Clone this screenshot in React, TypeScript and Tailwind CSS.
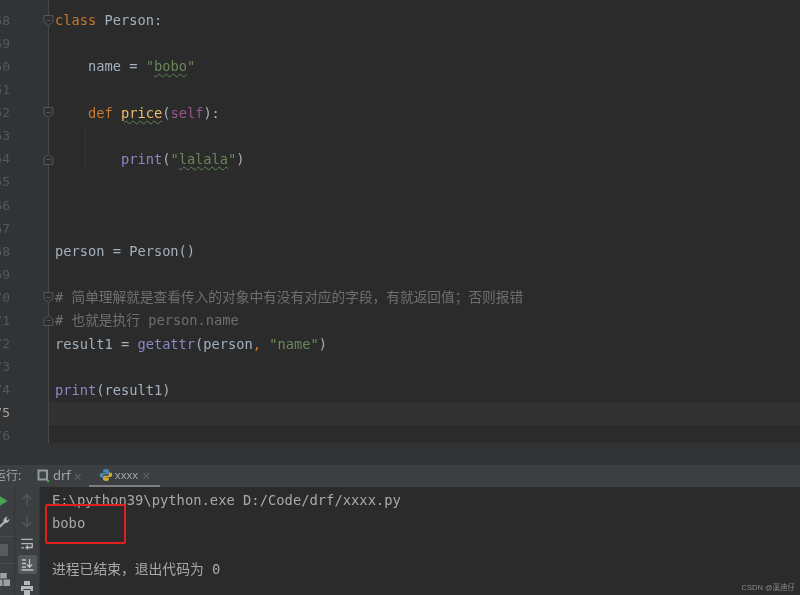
const mono = "font-['DejaVu_Sans_Mono','Noto_Sans_CJK_SC',monospace]";

function Fold({ kind }: { kind: "open" | "close" }) {
  return (
    <svg width="11" height="13" viewBox="0 0 11 13" className="absolute -right-[6px] top-[5px] z-10">
      {kind === "open" ? (
        <path d="M1 1.5H10V8L5.5 11.5L1 8Z" fill="#2d2e2f" stroke="#54575a" strokeWidth="1" />
      ) : (
        <path d="M1 11.5H10V5L5.5 1.5L1 5Z" fill="#2d2e2f" stroke="#54575a" strokeWidth="1" />
      )}
      <path d="M3.5 6.5H7.5" stroke="#54575a" strokeWidth="1" />
    </svg>
  );
}

function Row({ n, fold, active, children }: { n: string; fold?: "open" | "close"; active?: boolean; children?: React.ReactNode }) {
  return (
    <div className={`flex h-[23.1px] items-center ${active ? "bg-[#323232]" : ""}`}>
      <div className="relative flex h-full w-[49px] shrink-0 items-center border-r border-[#46484a] bg-[#313335]">
        <span className={`w-[10px] overflow-hidden text-right text-[13px] whitespace-nowrap ${active ? "text-[#a4a3a3]" : "text-[#55585a]"}`} dir="rtl">
          {n}
        </span>
        {fold && <Fold kind={fold} />}
      </div>
      <div className="pl-[6px] text-[13.7px] whitespace-pre text-[#a3b0bd]">{children}</div>
    </div>
  );
}

const Wavy = ({ children, cls }: { children: React.ReactNode; cls: string }) => (
  <span className={`underline decoration-wavy decoration-1 underline-offset-2 decoration-[#62845a] ${cls}`}>{children}</span>
);

function Editor() {
  const str = "text-[#6a8759]";
  const kw = "text-[#c57a35]";
  const fn = "text-[#8888c6]";
  const cm = "text-[#6f6f6f]";
  return (
    <div className="relative h-[443px] shrink-0 overflow-hidden bg-[#2b2b2b]">
      <div className="h-[9px] w-[49px] border-r border-[#46484a] bg-[#313335]" />
      <Row n="68" fold="open"><span className={kw}>class</span> Person:</Row>
      <Row n="69" />
      <Row n="60">    name = <span className={str}>"<Wavy cls={str}>bobo</Wavy>"</span></Row>
      <Row n="61" />
      <Row n="62" fold="open">    <span className={kw}>def</span> <Wavy cls="text-[#e8bf6a]">price</Wavy>(<span className="text-[#94558d]">self</span>):</Row>
      <Row n="63" />
      <Row n="64" fold="close">        <span className={fn}>print</span>(<span className={str}>"<Wavy cls={str}>lalala</Wavy>"</span>)</Row>
      <Row n="65" />
      <Row n="66" />
      <Row n="67" />
      <Row n="68">person = Person()</Row>
      <Row n="69" />
      <Row n="70" fold="open"><span className={cm}># 简单理解就是查看传入的对象中有没有对应的字段，有就返回值；否则报错</span></Row>
      <Row n="71" fold="close"><span className={cm}># 也就是执行 person.name</span></Row>
      <Row n="72">result1 = <span className={fn}>getattr</span>(person<span className={kw}>,</span> <span className={str}>"name"</span>)</Row>
      <Row n="73" />
      <Row n="74"><span className={fn}>print</span>(result1)</Row>
      <Row n="75" active />
      <Row n="76" />
      <div className="absolute left-[85px] top-[124px] h-[44px] w-px bg-[#343434]" />
    </div>
  );
}

function Tabs() {
  return (
    <div className="flex h-[22px] shrink-0 items-center overflow-hidden bg-[#3c3f41] text-[12px] text-[#a2a5a7] font-['Noto_Sans','Noto_Sans_CJK_SC',sans-serif]">
      <span className="-ml-[6px] w-[43px] whitespace-nowrap">运行:</span>
      <svg width="13" height="14" viewBox="0 0 13 14" className="shrink-0">
        <rect x="0.5" y="0.5" width="10.5" height="11" fill="#8f9c98" />
        <rect x="2.5" y="2.5" width="6.5" height="7" fill="#3f4446" />
        <circle cx="11" cy="12" r="1.3" fill="#4aa551" />
      </svg>
      <span className="ml-[3px] text-[13px]">drf</span>
      <span className="ml-[3px] text-[14px] text-[#5f6264]">×</span>
      <div className="ml-[7px] flex h-full w-[71px] items-center border-b-[2px] border-[#7a7e80] pl-[10px]">
        <svg width="14" height="14" viewBox="0 0 14 14" className="shrink-0">
          <path d="M7 1C4.5 1 4 2 4 3V4.5H7.3V5H2.5C1.3 5 .8 6 .8 7.2S1.3 9.5 2.5 9.5H4V8C4 7 5 6.3 6 6.3H8.5C9.4 6.3 10 5.6 10 4.8V3C10 2 9 1 7 1Z" fill="#4d86b3" />
          <path d="M7 13C9.5 13 10 12 10 11V9.5H6.7V9H11.5C12.7 9 13.2 8 13.2 6.8S12.7 4.5 11.5 4.5H10V6C10 7 9 7.7 8 7.7H5.5C4.6 7.7 4 8.4 4 9.2V11C4 12 5 13 7 13Z" fill="#c9a93f" />
        </svg>
        <span className="ml-[2px] text-[11px] text-[#a2a5a7]">xxxx</span>
        <span className="ml-[4px] text-[14px] text-[#5f6264]">×</span>
      </div>
    </div>
  );
}

function Toolbar() {
  return (
    <>
      <div className="flex w-[15px] shrink-0 flex-col items-start overflow-hidden border-r border-[#323436] bg-[#3c3f41] pt-[8px]">
        <svg width="10" height="12" viewBox="0 0 10 12" className="-ml-[2px]"><path d="M1 0.5L9.5 6L1 11.5Z" fill="#4aa551" /></svg>
        <svg width="13" height="13" viewBox="0 0 12 12" className="-ml-[3px] mt-[8px]"><path d="M1 11L6 6.2C5.5 4 7 1.5 10 1.5L8.5 3.5L9.5 5L11.5 3.5C11.5 6 9.5 7.8 7.4 7.3L2.6 12Z" fill="#b4b7b9" /></svg>
        <div className="mt-[8px] h-px w-full bg-[#4a4d4f]" />
        <div className="mt-[7px] h-[12px] w-[8px] bg-[#585b5d]" />
        <div className="mt-[7px] h-px w-full bg-[#4a4d4f]" />
        <svg width="13" height="13" viewBox="0 0 12 12" className="-ml-[3px] mt-[9px]"><path d="M0 6h5v6H0zM6 6h6v6H6zM3 0h6v5H3z" fill="#9da0a2" /></svg>
      </div>
      <div className="flex w-[25px] shrink-0 flex-col items-center border-r border-[#323436] bg-[#3c3f41] pt-[6px]">
        <svg width="14" height="14" viewBox="0 0 14 14"><path d="M7 13V2M2.5 6.5L7 2L11.5 6.5" fill="none" stroke="#55585a" strokeWidth="1.5" /></svg>
        <svg width="14" height="14" viewBox="0 0 14 14" className="mt-[9px]"><path d="M7 1V12M2.5 7.5L7 12L11.5 7.5" fill="none" stroke="#55585a" strokeWidth="1.5" /></svg>
        <svg width="14" height="14" viewBox="0 0 14 14" className="mt-[8px]"><path d="M1 2.5H13M1 7H12.5V11H6M8 9L6 11L8 13M1 11.5H4" fill="none" stroke="#b4b7b9" strokeWidth="1.4" /></svg>
        <div className="mt-[5px] flex h-[19px] w-[19px] shrink-0 items-center justify-center rounded-[2px] bg-[#53575a]">
          <svg width="13" height="13" viewBox="0 0 13 13"><path d="M1 2H5M1 5.5H5M1 9H5M0.5 12H12.5M8.5 1V9M5.8 6.5L8.5 9.3L11.2 6.5" fill="none" stroke="#c0c3c5" strokeWidth="1.3" /></svg>
        </div>
        <svg width="14" height="14" viewBox="0 0 14 14" className="mt-[7px] shrink-0"><path d="M4 0H10V4H4ZM1 5H13V10H10.5V8H3.5V10H1ZM4 9H10V14H4Z" fill="#b4b7b9" /></svg>
      </div>
    </>
  );
}

function Console() {
  return (
    <div className="relative flex min-w-0 flex-1 overflow-hidden bg-[#2b2b2b]">
      <Toolbar />
      <div className={`pl-[12px] pt-[1.5px] text-[13.8px] leading-[23.2px] whitespace-pre text-[#a9a9a9] ${mono}`}>
        <div>E:\python39\python.exe D:/Code/drf/xxxx.py</div>
        <div>bobo</div>
        <div>&nbsp;</div>
        <div>进程已结束，退出代码为 0</div>
      </div>
      <div className="absolute left-[45px] top-[17px] h-[40px] w-[81px] rounded-[2px] border-[2px] border-[#e0211b]" />
      <span className="absolute right-[5px] bottom-[2px] text-[7.5px] text-[#8a8a8a] font-['Liberation_Sans','Noto_Sans_CJK_SC',sans-serif]">CSDN @溪迪仔</span>
    </div>
  );
}

export default function App() {
  return (
    <div className={`flex h-[595px] w-[800px] flex-col overflow-hidden bg-[#313335] blur-[0.5px] ${mono}`}>
      <Editor />
      <div className="h-[22px] shrink-0 bg-[#313335]" />
      <Tabs />
      <Console />
    </div>
  );
}
